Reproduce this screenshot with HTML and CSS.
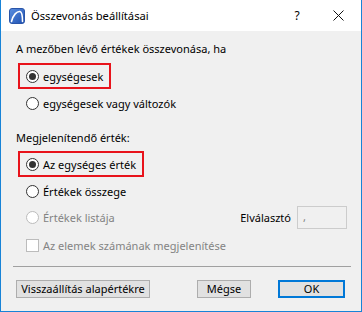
FILE: index.html
```html
<!DOCTYPE html>
<html lang="hu">
<head>
<meta charset="utf-8">
<title>Összevonás beállításai</title>
<link rel="stylesheet" href="styles.css">
</head>
<body>
<div class="window">
  <div class="titlebar">
    <svg class="app-icon" width="16" height="16" viewBox="0 0 16 16">
      <defs>
        <linearGradient id="g" x1="0" y1="0" x2="1" y2="1">
          <stop offset="0" stop-color="#5b8fe0"/>
          <stop offset="1" stop-color="#1d4fb0"/>
        </linearGradient>
      </defs>
      <rect x="0.5" y="0.5" width="15" height="15" rx="2.5" fill="url(#g)" stroke="#2a55a8" stroke-width="1"/>
      <path d="M2.5 13.5 C4 7 8 3 11 3.5 C13 4 13.5 7 13.5 13.5" fill="none" stroke="#fff" stroke-width="1.6" stroke-linecap="round"/>
    </svg>
    <span class="title">Összevonás beállításai</span>
    <span class="tb-help">?</span>
    <svg class="tb-close" width="11" height="11" viewBox="0 0 11 11">
      <path d="M0.5 0.5 L10.5 10.5 M10.5 0.5 L0.5 10.5" stroke="#111" stroke-width="1"/>
    </svg>
  </div>
  <div class="content">
    <div class="label row-l1">A mezőben lévő értékek összevonása, ha</div>
    <div class="highlight hl-1">
      <span class="radio checked"></span><span>egységesek</span>
    </div>
    <div class="opt row-r2"><span class="radio"></span><span>egységesek vagy változók</span></div>

    <div class="label row-l2">Megjelenítendő érték:</div>
    <div class="highlight hl-2">
      <span class="radio checked"></span><span>Az egységes érték</span>
    </div>
    <div class="opt row-r4"><span class="radio"></span><span>Értékek összege</span></div>
    <div class="opt row-r5">
      <span class="radio disabled"></span><span class="dim">Értékek listája</span>
      <span class="spacer"></span>
      <span class="sep-label">Elválasztó</span>
      <span class="sep-input">,</span>
    </div>
    <div class="opt row-c1"><span class="check disabled"></span><span class="dim">Az elemek számának megjelenítése</span></div>

    <div class="divider"></div>

    <div class="buttons">
      <button class="btn btn-reset">Visszaállítás alapértékre</button>
      <span class="spacer"></span>
      <button class="btn btn-cancel">Mégse</button>
      <button class="btn btn-ok">OK</button>
    </div>
  </div>
</div>
</body>
</html>
```

FILE: styles.css
```css
* { box-sizing: border-box; }
html, body { margin: 0; padding: 0; }
body {
  width: 362px;
  height: 312px;
  overflow: hidden;
  font-family: "Noto Sans", "Open Sans", sans-serif;
  font-size: 11px;
  color: #000;
  background: #f0f0f0;
}
.window {
  width: 362px;
  height: 312px;
  border: 1px solid #1883d7;
  border-top: none;
  background: #f0f0f0;
  display: flex;
  flex-direction: column;
}
.titlebar {
  height: 31px;
  background: #fff;
  display: flex;
  align-items: center;
  padding-left: 8px;
  flex: none;
}
.app-icon { flex: none; }
.title {
  margin-left: 6px;
  font-size: 11.2px;
  line-height: 16px;
}
.tb-help {
  margin-left: auto;
  font-size: 12px;
  width: 12px;
  text-align: center;
}
.tb-close {
  margin-left: 30px;
  margin-right: 17px;
}
.content {
  padding: 0 14px 0 15px;
  display: flex;
  flex-direction: column;
}
.label {
  height: 18px;
  line-height: 18px;
  white-space: nowrap;
}
.row-l1 { margin-top: 9px; }
.row-l2 { margin-top: 17px; }
.opt {
  display: flex;
  align-items: center;
  height: 18px;
  padding-left: 10px;
  white-space: nowrap;
}
.highlight {
  align-self: flex-start;
  display: flex;
  align-items: center;
  height: 26px;
  margin-left: 2px;
  border: 2px solid #e8131b;
  padding: 0 6px 0 6px;
  white-space: nowrap;
}
.hl-1 { margin-top: 5px; }
.hl-2 { margin-top: 4px; }
.row-r2 { margin-top: 5px; }
.row-r4 { margin-top: 5px; }
.row-r5 { margin-top: 6px; height: 23px; }
.row-c1 { margin-top: 7px; }

.radio {
  width: 13px;
  height: 13px;
  border: 1px solid #333;
  border-radius: 50%;
  background: #fff;
  margin-right: 4px;
  flex: none;
  display: flex;
  align-items: center;
  justify-content: center;
}
.radio.checked::after {
  content: "";
  width: 7px;
  height: 7px;
  border-radius: 50%;
  background: #333;
}
.radio.disabled { border-color: #bcbcbc; }
.check {
  width: 13px;
  height: 13px;
  border: 1px solid #bcbcbc;
  background: #fff;
  margin-right: 4px;
  flex: none;
}
.dim { color: #838383; }
.spacer { flex: 1; }
.sep-label { margin-right: 6px; }
.sep-input {
  width: 50px;
  height: 23px;
  border: 1px solid #cccccc;
  background: #f0f0f0;
  color: #838383;
  padding-left: 5px;
  line-height: 19px;
}
.divider {
  margin-top: 12px;
  margin-left: -3px;
  margin-right: -4px;
  height: 1px;
  background: #a0a0a0;
}
.buttons {
  display: flex;
  align-items: center;
  margin-top: 13px;
}
.btn {
  font-family: inherit;
  font-size: 11px;
  color: #000;
  background: #e1e1e1;
  border: 1px solid #adadad;
  height: 18px;
  padding: 0;
  line-height: 14px;
  white-space: nowrap;
}
.btn-reset { width: 134px; }
.btn-cancel { width: 54px; }
.btn-ok {
  width: 67px;
  margin-left: 27px;
  margin-right: 2px;
  border: 2px solid #0078d7;
}
```
